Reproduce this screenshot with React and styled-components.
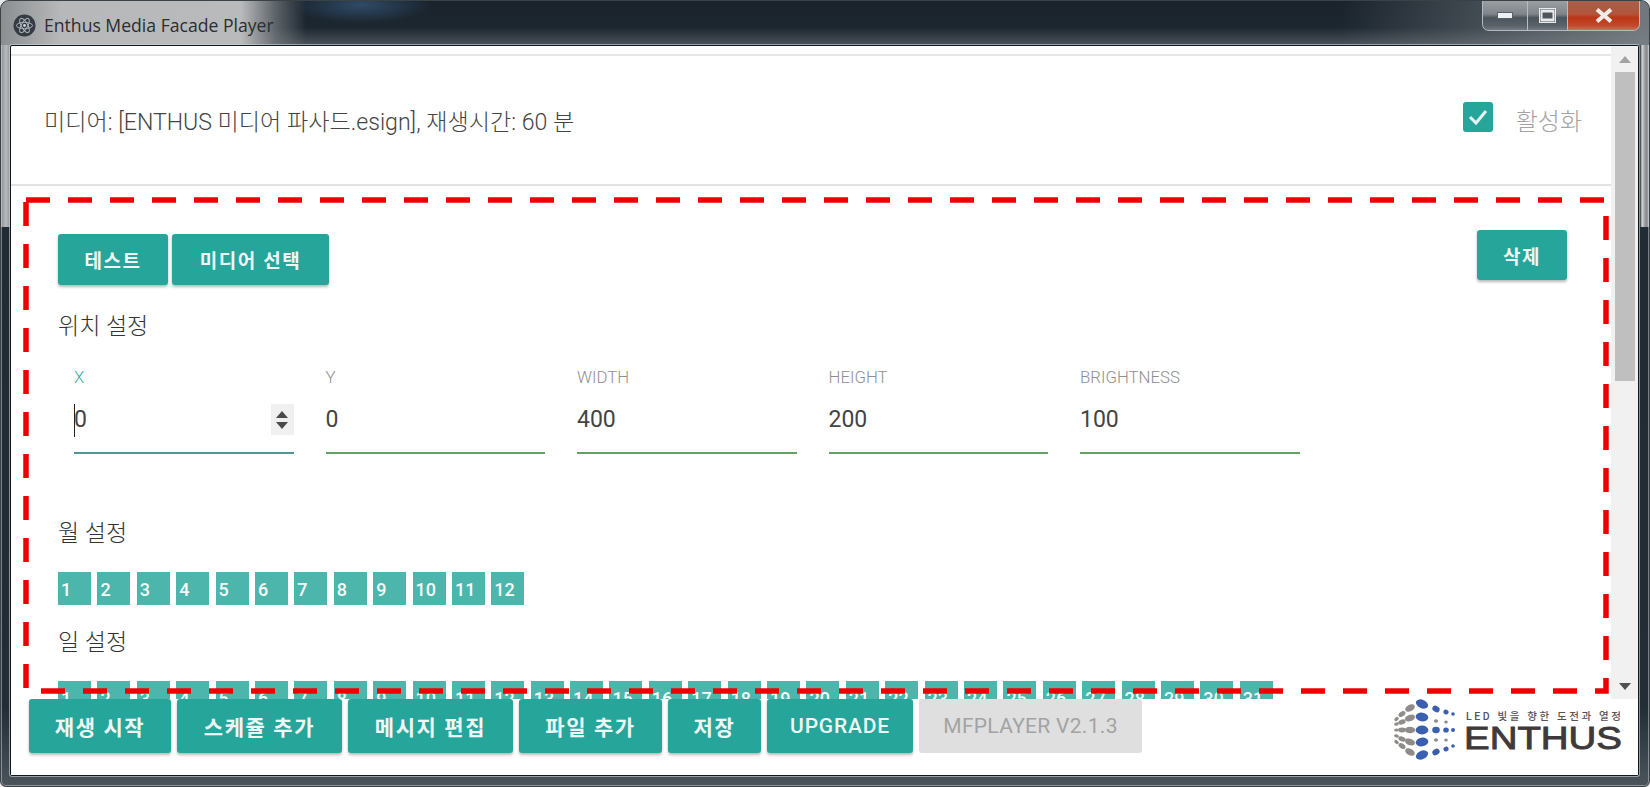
import styled, { createGlobalStyle } from 'styled-components';

const teal = '#26a69a';
const sans = `Roboto, "Noto Sans CJK KR", sans-serif`;

const GlobalStyle = createGlobalStyle`
    html, body {
        margin: 0;
        padding: 0;
        background: #e8e8e8;
        overflow: hidden;
    }
    * {
        box-sizing: border-box;
    }
`;

const Frame = styled.div`
    position: relative;
    width: 1650px;
    height: 787px;
    display: flex;
    flex-direction: column;
    overflow: hidden;
    border-radius: 9px 9px 6px 6px;
    border: 1px solid #3a4147;
    box-shadow: inset 0 0 0 1px rgba(225, 230, 235, 0.45);
    background:
        linear-gradient(90deg, #8d9093 0, #b9bbbd 5px, #8f9295 9px, transparent 10px, transparent 1639px, #d4d5d6 1641px, #85898d 1645px, #a5a8ab 100%) top / 100% 226px no-repeat,
        linear-gradient(180deg, #1f2a33 0, #222d36 90%, #4b545b 100%);
`;

const TitleBar = styled.div`
    height: 44px;
    flex: none;
    display: flex;
    align-items: flex-start;
    justify-content: space-between;
    background:
        radial-gradient(ellipse 70px 18px at 360px 4px, rgba(56, 92, 130, 0.7), transparent),
        linear-gradient(90deg, #8b8e91 0, #b7b8b9 60px, #b9babb 240px, rgba(120, 124, 128, 0.7) 275px, transparent 305px),
        linear-gradient(90deg, transparent 1340px, rgba(128, 134, 139, 0.85) 1640px),
        linear-gradient(180deg, #1a232c 0, #1d2730 60%, #4a525a 100%);
`;

const TitleGroup = styled.div`
    display: flex;
    align-items: center;
    gap: 8px;
    padding: 12px 0 0 12px;
`;

const TitleText = styled.span`
    font: 400 17.6px "Open Sans", sans-serif;
    color: #2b2d30;
    white-space: nowrap;
`;

const WindowButtons = styled.div`
    display: flex;
    height: 30px;
    margin-right: 9px;
    border: 1px solid #b4b9bd;
    border-top: 0;
    border-radius: 0 0 7px 7px;
    overflow: hidden;
`;

const WindowButton = styled.div`
    width: ${(p) => p.$w}px;
    display: flex;
    align-items: center;
    justify-content: center;
    border-left: ${(p) => (p.$first ? '0' : '1px solid #b9bdc0')};
    background: ${(p) =>
        p.$close
            ? 'linear-gradient(180deg, #a8604c 0, #b3543a 45%, #bd3416 58%, #c4492c 85%, #c9705c 100%)'
            : 'linear-gradient(180deg, #9a9fa3 0, #7f858a 45%, #4d555c 58%, #5a6269 85%, #737a80 100%)'};
`;

const Client = styled.div`
    flex: 1;
    min-height: 0;
    margin: 0 10px 10px 9px;
    display: flex;
    flex-direction: column;
    background: #fff;
    border: 1px solid #11181e;
    border-radius: 2px;
    box-shadow: 0 0 0 1px rgba(205, 215, 222, 0.6);
`;

const Main = styled.div`
    height: 653px;
    flex: none;
    display: flex;
`;

const Pane = styled.div`
    flex: 1;
    min-width: 0;
    overflow: hidden;
`;

const TopStrip = styled.div`
    height: 10px;
    border-bottom: 2px solid #e6e6e6;
`;

const MediaRow = styled.div`
    height: 130px;
    display: flex;
    align-items: center;
    justify-content: space-between;
    padding: 0 29px 0 33px;
    border-bottom: 2px solid #e2e2e2;
`;

const MediaText = styled.span`
    font: 300 23.1px ${sans};
    color: #444;
    white-space: nowrap;
`;

const Toggle = styled.div`
    display: flex;
    align-items: center;
    gap: 23px;
    margin-bottom: 2px;
`;

const CheckBox = styled.div`
    width: 30px;
    height: 30px;
    margin-bottom: 4px;
    border-radius: 3px;
    background: ${teal};
    display: flex;
    align-items: center;
    justify-content: center;
`;

const ToggleLabel = styled.span`
    font: 300 24px ${sans};
    color: #a3a3a3;
`;

const Section = styled.div`
    padding: 44px 44px 0 47px;
`;

const Toolbar = styled.div`
    display: flex;
    justify-content: space-between;
    align-items: flex-start;
`;

const ButtonGroup = styled.div`
    display: flex;
    gap: 4px;
    margin-top: 4px;
`;

const TealButton = styled.div`
    width: ${(p) => p.$w}px;
    height: ${(p) => p.$h || 51}px;
    display: flex;
    align-items: center;
    justify-content: center;
    flex: none;
    border-radius: 3px;
    background: ${teal};
    color: #eef7f6;
    font: ${(p) => p.$weight || 700} ${(p) => p.$size || 19}px ${sans};
    letter-spacing: ${(p) => p.$spacing ?? 1.6}px;
    white-space: nowrap;
    box-shadow: 0 2px 3px rgba(0, 0, 0, 0.28);
`;

const GroupTitle = styled.div`
    font: 300 23px/30px ${sans};
    color: #333;
    margin-top: ${(p) => p.$top}px;
`;

const Fields = styled.div`
    display: flex;
    gap: 32px;
    margin: 25px 0 0 16px;
`;

const Field = styled.div`
    position: relative;
    width: 219.5px;
    height: 87px;
    border-bottom: 2px solid ${(p) => (p.$active ? '#4b9a98' : '#62a066')};
`;

const FieldLabel = styled.div`
    font: 300 16.8px/20px ${sans};
    color: ${(p) => (p.$active ? '#3fae9f' : '#8f8f8f')};
`;

const FieldValue = styled.div`
    font: 400 23px/30px ${sans};
    color: #444;
    margin-top: 18px;
`;

const Caret = styled.span`
    position: absolute;
    left: 0;
    top: 37px;
    width: 1px;
    height: 33px;
    background: #222;
`;

const Spinner = styled.div`
    position: absolute;
    right: 0;
    top: 37px;
    width: 23px;
    height: 31px;
    background: #f0f0f0;
    display: flex;
    align-items: center;
    justify-content: center;
`;

const Chips = styled.div`
    display: flex;
    gap: 6.4px;
    margin-top: ${(p) => p.$top}px;
`;

const Chip = styled.div`
    width: 33px;
    height: 33px;
    flex: none;
    background: #4db6ac;
    color: #f4fbfa;
    font: 500 18px/35px ${sans};
    padding-left: 3px;
    white-space: nowrap;
`;

const ScrollBar = styled.div`
    width: 27px;
    flex: none;
    background: #f1f1f1;
    display: flex;
    flex-direction: column;
    align-items: center;
`;

const ScrollArrow = styled.div`
    height: 26px;
    display: flex;
    align-items: center;
    flex: none;
`;

const ScrollThumb = styled.div`
    width: 20px;
    height: 309px;
    flex: none;
    background: #bfbfbf;
    margin-bottom: auto;
`;

const Footer = styled.div`
    flex: 1;
    display: flex;
    align-items: flex-start;
    gap: 6px;
    padding: 0 15px 0 18px;
    background: #fff;
`;

const DisabledButton = styled(TealButton)`
    background: #dfdfdf;
    color: #a3a3a3;
    box-shadow: none;
`;

const LogoWrap = styled.div`
    margin-left: auto;
    display: flex;
`;

const Annotation = styled.svg`
    position: absolute;
    left: -1px;
    top: -1px;
    pointer-events: none;
`;

const months = Array.from({ length: 12 }, (_, i) => i + 1);
const days = Array.from({ length: 31 }, (_, i) => i + 1);

const fields = [
    { label: 'X', value: '0', active: true },
    { label: 'Y', value: '0' },
    { label: 'WIDTH', value: '400' },
    { label: 'HEIGHT', value: '200' },
    { label: 'BRIGHTNESS', value: '100' },
];

// x, y, rx, ry, angle, colour
const blue = '#3a5fb0';
const grey = '#8f8c8a';
const logoDots = [
    [28, 5, 6.4, 4.2, 25, blue], [28, 18, 6.4, 4.4, 10, blue], [28, 31, 6.4, 4.4, 0, blue], [28, 43, 6.4, 4.4, -10, blue], [28, 56, 6.4, 4.2, -25, blue],
    [42, 10, 3.8, 3, 30, blue], [42, 22, 2.1, 1.8, 0, grey], [42, 31, 3.8, 3.3, 0, blue], [42, 41, 2.1, 1.8, 0, grey], [42, 53, 3.8, 3, -30, blue],
    [52, 13, 2.6, 2.4, 30, blue], [52, 23, 1.8, 1.5, 0, grey], [52, 31, 2.8, 2.6, 0, blue], [52, 41, 1.8, 1.5, 0, grey], [52, 50, 2.6, 2.4, -30, blue],
    [59, 15, 1.8, 1.8, 0, blue], [59, 31, 2, 2, 0, blue], [59, 47, 1.8, 1.8, 0, blue],
    [16, 9, 5.2, 3.3, -30, grey], [16, 19, 5.2, 3.3, -20, grey], [16, 31, 5.2, 3.3, 0, grey], [16, 43, 5.2, 3.3, 20, grey], [16, 53, 5.2, 3.3, 30, grey],
    [8, 15, 3.8, 2.4, -35, grey], [8, 23, 3.8, 2.4, -20, grey], [8, 31, 3.8, 2.4, 0, grey], [8, 40, 3.8, 2.4, 20, grey], [8, 47, 3.8, 2.4, 35, grey],
    [2.5, 20, 2.4, 1.7, -40, grey], [2.5, 25, 2.4, 1.6, -20, grey], [2.5, 31, 2.4, 1.6, 0, grey], [2.5, 37, 2.4, 1.6, 20, grey], [2.5, 43, 2.4, 1.7, 40, grey],
];

function Logo() {
    return (
        <svg width="229" height="62" viewBox="0 0 229 62">
            {logoDots.map(([x, y, rx, ry, a, c], i) => (
                <ellipse key={i} cx={x} cy={y} rx={rx} ry={ry} fill={c} transform={`rotate(${a} ${x} ${y})`} />
            ))}
            <text x="72" y="21" textLength="155" lengthAdjust="spacing" fontSize="10.5" fontWeight="500" fontFamily={sans} fill="#55525a">
                LED 빛을 향한 도전과 열정
            </text>
            <text x="70" y="50" textLength="158" lengthAdjust="spacingAndGlyphs" fontSize="32" fontWeight="400" stroke="#3e3a3b" strokeWidth="0.9" fontFamily='"Liberation Sans", sans-serif' fill="#3e3a3b">
                ENTHUS
            </text>
        </svg>
    );
}

function AppIcon() {
    return (
        <svg width="23" height="23" viewBox="0 0 23 23">
            <circle cx="11.5" cy="11.5" r="11" fill="#343b43" />
            <g fill="none" stroke="#aeb6bd" strokeWidth="1">
                <ellipse cx="11.5" cy="11.5" rx="8" ry="3.2" />
                <ellipse cx="11.5" cy="11.5" rx="8" ry="3.2" transform="rotate(60 11.5 11.5)" />
                <ellipse cx="11.5" cy="11.5" rx="8" ry="3.2" transform="rotate(120 11.5 11.5)" />
            </g>
            <circle cx="11.5" cy="11.5" r="1.4" fill="#cfd5da" />
        </svg>
    );
}

function App() {
    return (
        <>
            <GlobalStyle />
            <Frame>
                <TitleBar>
                    <TitleGroup>
                        <AppIcon />
                        <TitleText>Enthus Media Facade Player</TitleText>
                    </TitleGroup>
                    <WindowButtons>
                        <WindowButton $w={44} $first>
                            <svg width="16" height="7"><rect x="0.5" y="0.5" width="15" height="6" fill="#eef0f2" stroke="#5a6066" strokeWidth="1" /></svg>
                        </WindowButton>
                        <WindowButton $w={40}>
                            <svg width="17" height="15">
                                <rect x="0.5" y="0.5" width="16" height="14" fill="#4f565c" stroke="#e8eaec" strokeWidth="1" />
                                <rect x="1.5" y="1.5" width="14" height="3" fill="#e8eaec" />
                                <rect x="1.5" y="10.5" width="14" height="3" fill="#e8eaec" />
                                <rect x="1.5" y="4" width="2" height="7" fill="#e8eaec" />
                                <rect x="13.5" y="4" width="2" height="7" fill="#e8eaec" />
                            </svg>
                        </WindowButton>
                        <WindowButton $w={72} $close>
                            <svg width="20" height="15" viewBox="0 0 20 15">
                                <path d="M3 1.5 L17 13.5 M17 1.5 L3 13.5" stroke="#f2ece8" strokeWidth="4" />
                            </svg>
                        </WindowButton>
                    </WindowButtons>
                </TitleBar>
                <Client>
                    <Main>
                        <Pane>
                            <TopStrip />
                            <MediaRow>
                                <MediaText>미디어: [ENTHUS 미디어 파사드.esign], 재생시간: 60 분</MediaText>
                                <Toggle>
                                    <CheckBox>
                                        <svg width="22" height="18" viewBox="0 0 22 18">
                                            <path d="M3 9 L9 15 L19 3" fill="none" stroke="#e6f5f3" strokeWidth="3" />
                                        </svg>
                                    </CheckBox>
                                    <ToggleLabel>활성화</ToggleLabel>
                                </Toggle>
                            </MediaRow>
                            <Section>
                                <Toolbar>
                                    <ButtonGroup>
                                        <TealButton $w={110}>테스트</TealButton>
                                        <TealButton $w={157}>미디어 선택</TealButton>
                                    </ButtonGroup>
                                    <TealButton $w={90} $h={50}>삭제</TealButton>
                                </Toolbar>
                                <GroupTitle $top={27}>위치 설정</GroupTitle>
                                <Fields>
                                    {fields.map((f) => (
                                        <Field key={f.label} $active={f.active}>
                                            <FieldLabel $active={f.active}>{f.label}</FieldLabel>
                                            <FieldValue>{f.value}</FieldValue>
                                            {f.active && <Caret />}
                                            {f.active && (
                                                <Spinner>
                                                    <svg width="14" height="24" viewBox="0 0 14 24">
                                                        <path d="M7 3 L13 10 H1 Z M1 14 H13 L7 21 Z" fill="#4a4a4a" />
                                                    </svg>
                                                </Spinner>
                                            )}
                                        </Field>
                                    ))}
                                </Fields>
                                <GroupTitle $top={65}>월 설정</GroupTitle>
                                <Chips $top={23}>
                                    {months.map((n) => <Chip key={n}>{n}</Chip>)}
                                </Chips>
                                <GroupTitle $top={23}>일 설정</GroupTitle>
                                <Chips $top={23}>
                                    {days.map((n) => <Chip key={n}>{n}</Chip>)}
                                </Chips>
                            </Section>
                        </Pane>
                        <ScrollBar>
                            <ScrollArrow>
                                <svg width="12" height="7"><path d="M6 0 L12 7 H0 Z" fill="#a3a3a3" /></svg>
                            </ScrollArrow>
                            <ScrollThumb />
                            <ScrollArrow>
                                <svg width="12" height="7"><path d="M0 0 H12 L6 7 Z" fill="#505050" /></svg>
                            </ScrollArrow>
                        </ScrollBar>
                    </Main>
                    <Footer>
                        <TealButton $w={142} $h={54} $size={21}>재생 시작</TealButton>
                        <TealButton $w={165} $h={54} $size={21}>스케쥴 추가</TealButton>
                        <TealButton $w={165} $h={54} $size={21}>메시지 편집</TealButton>
                        <TealButton $w={143} $h={54} $size={21}>파일 추가</TealButton>
                        <TealButton $w={93} $h={54} $size={21}>저장</TealButton>
                        <TealButton $w={146} $h={54} $size={21} $weight={500} $spacing={0.8}>UPGRADE</TealButton>
                        <DisabledButton $w={223} $h={54} $size={21} $weight={400} $spacing={0.3}>MFPLAYER V2.1.3</DisabledButton>
                        <LogoWrap><Logo /></LogoWrap>
                    </Footer>
                </Client>
                <Annotation width="1650" height="787">
                    <rect x="26" y="200" width="1580" height="491" fill="none" stroke="#ee0000" strokeWidth="5.5" strokeDasharray="24 18" />
                </Annotation>
            </Frame>
        </>
    );
}

export default App;
